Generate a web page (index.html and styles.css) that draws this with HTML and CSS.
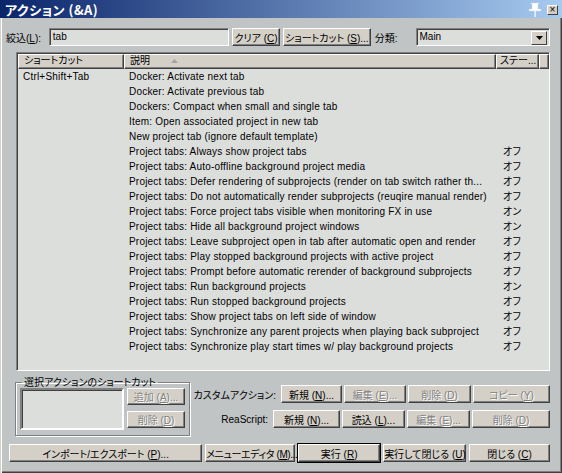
FILE: index.html
```html
<!DOCTYPE html>
<html lang="ja">
<head>
  <meta charset="UTF-8">
  <link rel="stylesheet" href="styles.css">
  <title>アクション</title>
</head>
<body>
  <div class="window">
    <div class="titlebar">
      <span class="title">アクション (&amp;A)</span>
      <svg class="pin" width="14" height="16" viewBox="0 0 14 16">
        <path d="M3 1h8v1h-1v5h3v2H1V7h3V2H3z" fill="#fff" stroke="#c8d4e4" stroke-width="0.5"/>
        <rect x="6.5" y="9" width="1.2" height="6" fill="#fff"/>
      </svg>
      <div class="closebtn">×</div>
    </div>

    <div class="content">
      <div class="filter">
        <span class="lbl">絞込(<u>L</u>):</span>
        <div class="field search">tab</div>
        <button class="btn clear">クリア (<u>C</u>)</button>
        <button class="btn shortcut">ショートカット (<u>S</u>)...</button>
        <span class="lbl cat">分類:</span>
        <div class="field select">Main<span class="drop"><svg width="7" height="4" viewBox="0 0 7 4"><path d="M0 0h7L3.5 4z" fill="#000"/></svg></span></div>
      </div>

      <div class="list">
        <div class="head">
          <div class="hcell">ショートカット</div>
          <div class="hcell">説明 <svg class="sort" width="7" height="4" viewBox="0 0 7 4"><path d="M3.5 0L7 4H0z" fill="#a4a4a4"/></svg></div>
          <div class="hcell">ステー...</div>
          <div class="hcell"></div>
        </div>
        <div class="rows">
          <div class="row"><span>Ctrl+Shift+Tab</span><span>Docker: Activate next tab</span><span></span></div>
          <div class="row"><span></span><span>Docker: Activate previous tab</span><span></span></div>
          <div class="row"><span></span><span>Dockers: Compact when small and single tab</span><span></span></div>
          <div class="row"><span></span><span>Item: Open associated project in new tab</span><span></span></div>
          <div class="row"><span></span><span>New project tab (ignore default template)</span><span></span></div>
          <div class="row"><span></span><span>Project tabs: Always show project tabs</span><span>オフ</span></div>
          <div class="row"><span></span><span>Project tabs: Auto-offline background project media</span><span>オフ</span></div>
          <div class="row"><span></span><span>Project tabs: Defer rendering of subprojects (render on tab switch rather th...</span><span>オフ</span></div>
          <div class="row"><span></span><span>Project tabs: Do not automatically render subprojects (reuqire manual render)</span><span>オフ</span></div>
          <div class="row"><span></span><span>Project tabs: Force project tabs visible when monitoring FX in use</span><span>オン</span></div>
          <div class="row"><span></span><span>Project tabs: Hide all background project windows</span><span>オン</span></div>
          <div class="row"><span></span><span>Project tabs: Leave subproject open in tab after automatic open and render</span><span>オフ</span></div>
          <div class="row"><span></span><span>Project tabs: Play stopped background projects with active project</span><span>オフ</span></div>
          <div class="row"><span></span><span>Project tabs: Prompt before automatic rerender of background subprojects</span><span>オフ</span></div>
          <div class="row"><span></span><span>Project tabs: Run background projects</span><span>オン</span></div>
          <div class="row"><span></span><span>Project tabs: Run stopped background projects</span><span>オフ</span></div>
          <div class="row"><span></span><span>Project tabs: Show project tabs on left side of window</span><span>オフ</span></div>
          <div class="row"><span></span><span>Project tabs: Synchronize any parent projects when playing back subproject</span><span>オフ</span></div>
          <div class="row"><span></span><span>Project tabs: Synchronize play start times w/ play background projects</span><span>オフ</span></div>
        </div>
      </div>

      <div class="lower">
        <fieldset class="group">
          <legend>選択アクションのショートカット</legend>
          <div class="group-inner">
            <div class="field keys"></div>
            <div class="side">
              <button class="btn off w58">追加 (<u>A</u>)...</button>
              <button class="btn off w58">削除 (<u>D</u>)</button>
            </div>
          </div>
        </fieldset>

        <div class="actions">
          <div class="arow">
            <span class="alabel">カスタムアクション:</span>
            <button class="btn" style="width:61px">新規 (<u>N</u>)...</button>
            <button class="btn off" style="width:62px">編集 (<u>E</u>)...</button>
            <button class="btn off" style="width:63px">削除 (<u>D</u>)</button>
            <button class="btn off" style="width:77px">コピー (<u>Y</u>)</button>
          </div>
          <div class="arow">
            <span class="alabel">ReaScript:</span>
            <button class="btn" style="width:67px">新規 (<u>N</u>)...</button>
            <button class="btn" style="width:63px">読込 (<u>L</u>)...</button>
            <button class="btn off" style="width:63px">編集 (<u>E</u>)...</button>
            <button class="btn off" style="width:78px">削除 (<u>D</u>)</button>
          </div>
        </div>
      </div>

      <div class="footer">
        <button class="btn" style="width:196px">インポート/エクスポート (<u>P</u>)...</button>
        <button class="btn tight" style="width:90px">メニューエディタ (<u>M</u>)...</button>
        <button class="btn default" style="width:83px">実行 (<u>R</u>)</button>
        <button class="btn" style="width:83px">実行して閉じる (<u>U</u>)</button>
        <button class="btn" style="width:82px">閉じる (<u>C</u>)</button>
      </div>
    </div>
  </div>
</body>
</html>
```

FILE: styles.css
```css
* {
  margin: 0;
  padding: 0;
  box-sizing: border-box;
}

body {
  background: #c0c4c4;
  font-family: "Liberation Sans", "Noto Sans CJK JP", sans-serif;
  font-size: 10px;
  font-feature-settings: "palt";
  color: #000;
}

.window {
  width: 562px;
  height: 473px;
  background: #c0c4c4;
  box-shadow: inset 1px 0 #d4d0c8, inset 2px 0 #fff, inset -1px -1px #404040, inset -2px -2px #808080;
  overflow: hidden;
}

.titlebar {
  height: 18px;
  display: flex;
  align-items: center;
  background: linear-gradient(to right, #0a246a, #a6caf0);
  padding: 0 4px 0 5px;
}

.title {
  color: #fff;
  font-weight: bold;
  font-size: 13px;
  font-family: "Noto Sans CJK JP", sans-serif;
  flex: 1;
  letter-spacing: 0.5px;
}

.pin {
  margin-right: 5px;
  margin-top: 1px;
}

.closebtn {
  width: 11px;
  height: 10px;
  background: #d4d0c8;
  border: 1px solid;
  border-color: #fff #404040 #404040 #fff;
  font-size: 10px;
  line-height: 7px;
  text-align: center;
  margin-top: 2px;
}

.content {
  padding: 10px 12px 0 6px;
}

.filter {
  display: flex;
  align-items: center;
  height: 18px;
}

.lbl {
  width: 43px;
  white-space: nowrap;
}

.lbl.cat {
  width: 41px;
  margin-left: 4px;
}

.field {
  height: 18px;
  background: #dcdedc;
  border: 1px solid;
  border-color: #808080 #fff #fff #808080;
  box-shadow: inset 1px 1px #404040;
  padding: 1px 0 0 3px;
  line-height: 14px;
}

.search {
  width: 181px;
  margin-right: 3px;
}

.select {
  width: 135px;
  display: flex;
  justify-content: space-between;
  padding-right: 2px;
}

.drop {
  width: 16px;
  height: 14px;
  margin-top: 1px;
  background: #d4d0c8;
  border: 1px solid;
  border-color: #fff #404040 #404040 #fff;
  display: flex;
  align-items: center;
  justify-content: center;
}

.btn {
  height: 18px;
  background: #d4d0c8;
  border: 1px solid;
  border-color: #fff #404040 #404040 #fff;
  box-shadow: inset -1px -1px #808080;
  font: inherit;
  font-feature-settings: "palt";
  white-space: nowrap;
  color: #000;
  padding: 0;
}

.btn.tight {
  letter-spacing: -0.4px;
}

.btn.off {
  color: #808080;
  text-shadow: 1px 1px #fff;
}

.btn.default {
  outline: 1px solid #000;
  outline-offset: 0;
}

.clear {
  width: 48px;
  margin-right: 3px;
}

.shortcut {
  width: 88px;
}

.list {
  margin: 6px 0 0 10px;
  width: 534px;
  height: 319px;
  background: #dcdedc;
  border: 1px solid;
  border-color: #808080 #fff #fff #808080;
  box-shadow: inset 1px 1px #404040;
  padding: 1px 0 0 1px;
}

.head {
  display: grid;
  grid-template-columns: 106px 372px 43px 1fr;
  height: 15px;
}

.hcell {
  background: #d4d0c8;
  border: 1px solid;
  border-color: #fff #404040 #404040 #fff;
  box-shadow: inset -1px -1px #808080;
  padding-left: 5px;
  line-height: 12px;
  white-space: nowrap;
  overflow: hidden;
}

.hcell:nth-child(3) {
  padding-left: 3px;
}

.sort {
  margin-left: 18px;
  vertical-align: 1px;
}

.row {
  display: grid;
  grid-template-columns: 106px 372px 43px;
  height: 15px;
  line-height: 15px;
  white-space: nowrap;
  letter-spacing: 0.2px;
}

.row span {
  padding-left: 5px;
  overflow: hidden;
}

.row span:nth-child(3) {
  padding-left: 7px;
}

.lower {
  display: flex;
  margin-top: 6px;
}

.group {
  margin-left: 9px;
  width: 174px;
  height: 59px;
  border: 1px solid #808080;
  box-shadow: inset 1px 1px #fff, 1px 1px #fff;
  padding: 0 4px 0 4px;
}

.group legend {
  padding: 0 2px;
  margin-left: 2px;
  line-height: 11px;
}

.group-inner {
  display: flex;
  gap: 3px;
}

.keys {
  width: 104px;
  height: 42px;
  border-width: 2px;
  border-color: #808080 #fff #fff #808080;
}

.side {
  display: flex;
  flex-direction: column;
  gap: 6px;
}

.w58 {
  width: 58px;
  height: 17px;
}

.actions {
  flex: 1;
  display: flex;
  flex-direction: column;
  align-items: flex-end;
  gap: 7px;
  padding-top: 8px;
}

.arow {
  display: flex;
  align-items: center;
  gap: 2px;
}

.arow .alabel {
  margin-right: 3px;
  white-space: nowrap;
}

.footer {
  display: flex;
  gap: 3px;
  margin: 8px 0 0 3px;
}
```
